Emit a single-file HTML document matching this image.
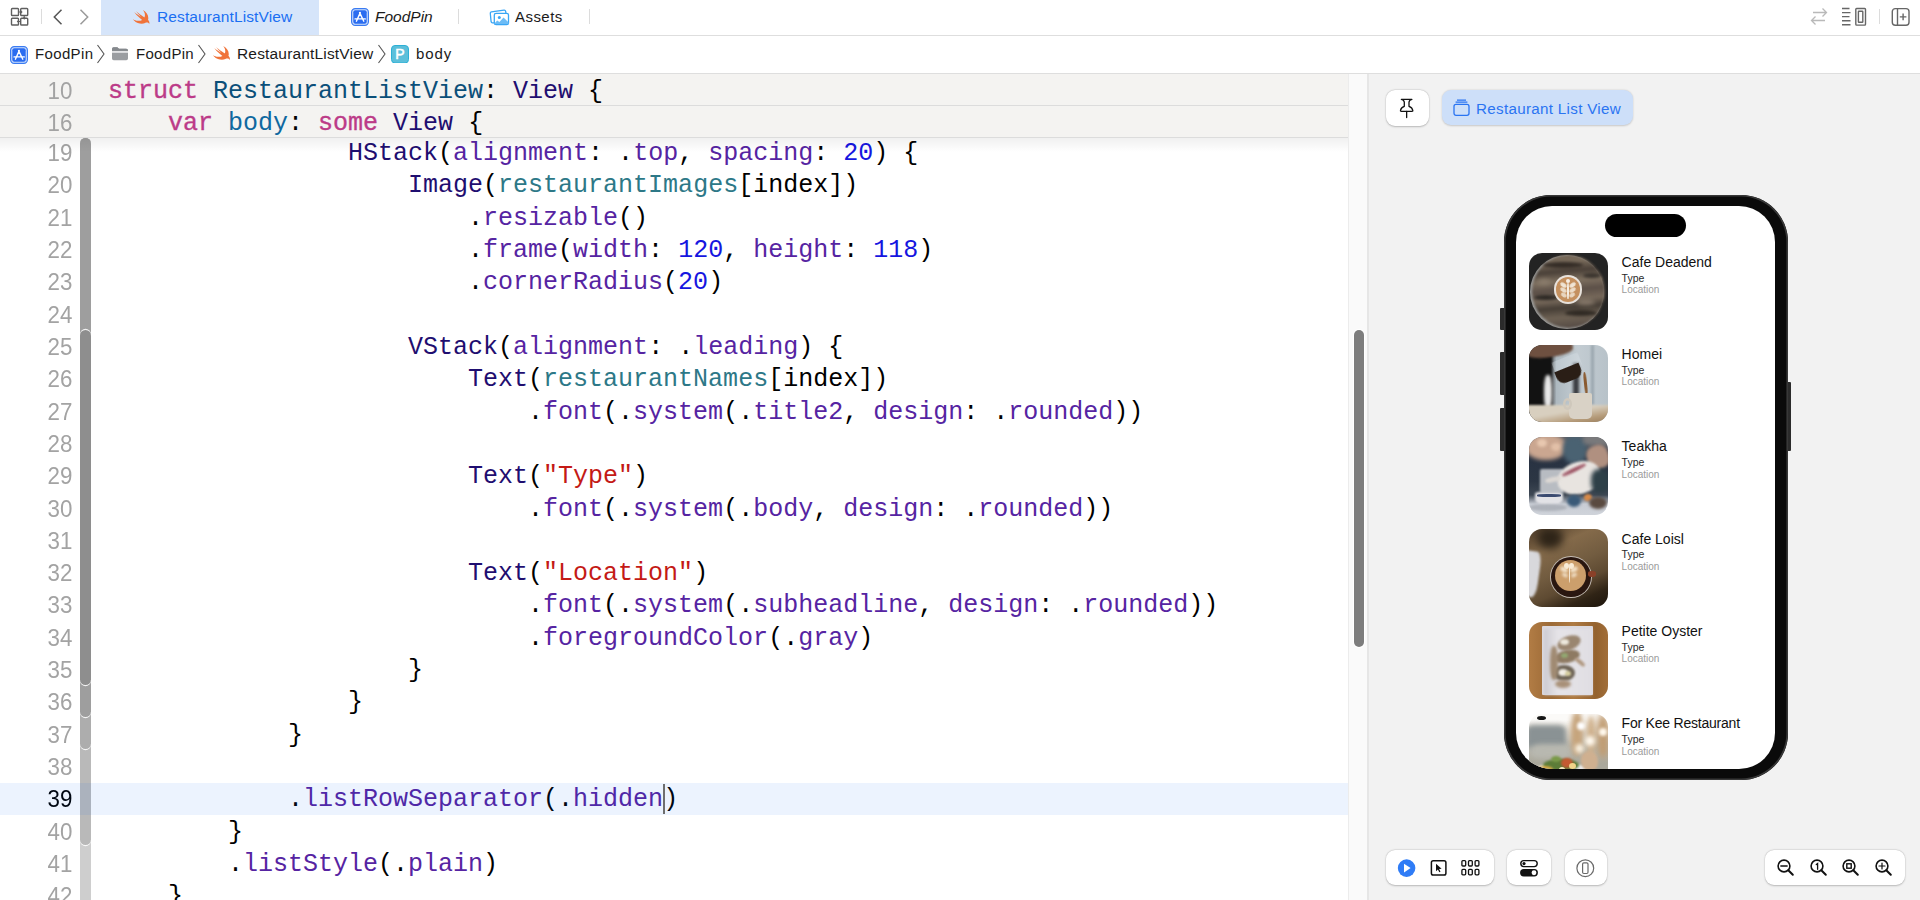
<!DOCTYPE html>
<html><head><meta charset="utf-8">
<style>
*{box-sizing:border-box;margin:0;padding:0}
html,body{width:1920px;height:900px;overflow:hidden;background:#fff;font-family:"Liberation Sans",sans-serif}
.abs{position:absolute}
/* tab bar */
#tabbar{position:absolute;left:0;top:0;width:1920px;height:36px;background:#fff;border-bottom:1px solid #dedede}
#crumb{position:absolute;left:0;top:36px;width:1920px;height:38px;background:#fff;border-bottom:1px solid #dedede}
.tabtxt{position:absolute;font-size:15.5px;line-height:18px;white-space:nowrap}
/* editor */
#editor{position:absolute;left:0;top:74px;width:1348px;height:826px;background:#fff;overflow:hidden}
.row{position:absolute;left:0;width:1348px;height:32.32px}
.ln{position:absolute;left:0;width:72.3px;transform:scaleX(0.95);transform-origin:72.3px 0;text-align:right;font-family:"Liberation Sans",sans-serif;font-size:23.5px;color:#a3a3a3;top:1px;line-height:32px;height:32px}
.ln.cur{color:#000}
.src{position:absolute;left:108px;top:2px;font-family:"Liberation Mono",monospace;font-size:25px;line-height:32px;white-space:pre;color:#000}
.k{color:#bc3b88;-webkit-text-stroke:0.35px #bc3b88}
.td{color:#0b4f79}
.t{color:#1f0e70}
.d{color:#0f68a0}
.f{color:#5624a2}
.p{color:#2d7887}
.n{color:#1616e0}
.s{color:#c41a16}
.hrow{position:absolute;left:0;width:1348px;height:32px;background:#f4f3f1;border-bottom:1px solid #dcdcdc}
.hrow .ln{top:1px}
#ribbon{position:absolute;left:80px;top:64px;width:11px;height:762px;border-radius:5.5px 5.5px 0 0;overflow:hidden}
.rb{box-shadow:0 1.2px 0 rgba(255,255,255,.85)}
#hdrshadow{position:absolute;left:0;top:64px;width:1348px;height:14px;background:linear-gradient(rgba(0,0,0,.06),rgba(0,0,0,0));z-index:5}
.hrow{z-index:6}
#scrolltrack{position:absolute;left:1348px;top:74px;width:21px;height:826px;background:#fafafa;border-left:1px solid #ececec;border-right:2px solid #e6e6e6}
#thumb{position:absolute;left:1353.5px;top:330px;width:10.5px;height:316.5px;border-radius:6px;background:#7d7d7d;box-shadow:0 0 0 1px #fff}
#canvas{position:absolute;left:1369px;top:74px;width:551px;height:826px;background:#f2f2f2}

.btn{position:absolute;background:#fff;border-radius:9px;box-shadow:0 0.5px 2px rgba(0,0,0,.22),0 0 0 0.5px rgba(0,0,0,.06)}
.rname{position:absolute;font-size:14px;line-height:16px;color:#111;white-space:nowrap}
.rtype{position:absolute;font-size:10.5px;line-height:12px;color:#2a2a2a;white-space:nowrap}
.rloc{position:absolute;font-size:10px;line-height:12px;color:#9b9b9b;white-space:nowrap}
.img{position:absolute;left:13.5px;width:78.5px;height:77.5px;border-radius:13px;overflow:hidden}

.img i{position:absolute;display:block}
</style></head><body>
<div id="tabbar">
<svg class="abs" style="left:10px;top:7px" width="20" height="20" viewBox="0 0 20 20" fill="none" stroke="#5f5f5f" stroke-width="1.4">
<rect x="1.5" y="1.5" width="7" height="7" rx="0.8"/><rect x="10.7" y="1.5" width="7" height="7" rx="0.8"/><rect x="1.5" y="11.2" width="7" height="6.8" rx="0.8"/><rect x="10.7" y="11.2" width="7" height="6.8" rx="0.8"/><path d="M8.5 5 H11.5 M10.6 4 L11.8 5 L10.6 6 M14.2 8.5 V11.6 M13.2 10.6 L14.2 11.8 L15.2 10.6 M10.7 14.5 H7.8 M8.8 13.5 L7.6 14.5 L8.8 15.5" stroke-width="1.1"/>
</svg>
<div class="abs" style="left:40.5px;top:9px;width:1.2px;height:15px;background:#dcdcdc"></div>
<svg class="abs" style="left:52px;top:8px" width="12" height="18" viewBox="0 0 12 18" fill="none" stroke="#555" stroke-width="1.5"><path d="M9.5 1.8 L2.3 9 L9.5 16.2"/></svg>
<svg class="abs" style="left:78px;top:8px" width="12" height="18" viewBox="0 0 12 18" fill="none" stroke="#9a9a9a" stroke-width="1.5"><path d="M2.5 1.8 L9.7 9 L2.5 16.2"/></svg>
<div class="abs" style="left:101px;top:0;width:218px;height:35px;background:#d6e5fa"></div>
<svg class="abs" style="left:133px;top:10px" width="16.5" height="14" viewBox="2.9 3.3 17.7 16.6" preserveAspectRatio="none"><path d="M13.543 3.41c4.114 2.47 6.545 7.162 5.549 11.131-.024.093-.05.181-.076.272l.002.001c2.062 2.538 1.5 5.258 1.236 4.745-1.072-2.086-3.066-1.568-4.088-1.043a6.803 6.803 0 0 1-.281.158l-.02.012-.002.002c-2.115 1.123-4.957 1.205-7.812-.022a12.568 12.568 0 0 1-5.64-4.838c.649.48 1.35.902 2.097 1.252 3.019 1.414 6.051 1.311 8.197-.002C9.651 12.73 7.101 9.67 5.146 7.191a10.628 10.628 0 0 1-1.005-1.384c2.34 2.142 6.038 4.83 7.365 5.576C8.69 8.408 6.208 4.743 6.324 4.86c4.436 4.47 8.528 6.996 8.528 6.996.154.085.27.154.36.213.085-.215.16-.437.224-.668.708-2.588-.09-5.548-1.893-7.992z" fill="#f0733a"/></svg>
<div class="tabtxt" style="left:157px;top:8.2px;color:#1a6ff2;letter-spacing:0.11px">RestaurantListView</div>
<svg class="abs" style="left:350.5px;top:8px" width="18" height="18" viewBox="0 0 18 18"><rect x="0.6" y="0.6" width="16.8" height="16.8" rx="3.6" fill="#d0e0fb" stroke="#3a7bf2" stroke-width="1.2"/><rect x="2.3" y="2.3" width="13.4" height="13.4" rx="2" fill="#2a6cf0"/><path d="M9.3 4.6 L5.4 13.2 M8.6 4.6 L12.8 13.2 M4 10.9 H14.3" stroke="#fff" stroke-width="1.4" stroke-linecap="round" fill="none"/></svg>
<div class="tabtxt" style="left:375px;top:7.9px;color:#1b1b1b;font-style:italic;font-size:15.5px">FoodPin</div>
<div class="abs" style="left:458px;top:9px;width:1.2px;height:15px;background:#dcdcdc"></div>
<svg class="abs" style="left:488px;top:7px" width="23" height="20" viewBox="0 0 23 20" fill="none" stroke="#3aa6f5" stroke-width="1.3" stroke-linejoin="round">
<path d="M6.2 15.8 L4.6 15.9 Q3.3 16 3.1 14.7 L2.3 6.5 Q2.1 5.2 3.4 4.9 L16 3.1 Q17.3 2.9 17.6 4.2 L17.9 6.2"/>
<rect x="6.3" y="6.3" width="14.2" height="11.4" rx="1.8" fill="#fff"/>
<circle cx="11.3" cy="10.4" r="1.5" fill="#3aa6f5" stroke="none"/>
<path d="M6.4 16.6 L9.2 13.4 L11.4 15 L15.5 10.4 L20.4 15.2 L20.4 17 L6.4 17Z" fill="#6cbcf6" stroke="none"/>
</svg>
<div class="tabtxt" style="left:515px;top:8.2px;color:#1b1b1b;font-size:15px;letter-spacing:0.45px">Assets</div>
<div class="abs" style="left:588.5px;top:9px;width:1.2px;height:15px;background:#dcdcdc"></div>
<svg class="abs" style="left:1809px;top:7px" width="20" height="20" viewBox="0 0 20 20" fill="none" stroke="#b9b9b9" stroke-width="1.3">
<path d="M4 5.5 L17.5 5.5 M13.5 1.5 L17.5 5.5 L13.5 9.5"/><path d="M16 13.5 L2.5 13.5 M6.5 9.5 L2.5 13.5 L6.5 17.5"/>
</svg>
<svg class="abs" style="left:1840px;top:7px" width="28" height="20" viewBox="0 0 28 20" fill="none" stroke="#666" stroke-width="1.4">
<path d="M2 1.5 H9.5 M2 5.6 H10.5 M2 9.6 H9.5 M2 13.7 H10.5 M2 17.7 H10.5"/>
<rect x="15.8" y="1.5" width="9.7" height="16.6" rx="0.8"/><rect x="18.4" y="4.2" width="4.4" height="11" rx="0.5"/>
</svg>
<div class="abs" style="left:1878.5px;top:9px;width:1.2px;height:15px;background:#dcdcdc"></div>
<svg class="abs" style="left:1890px;top:7px" width="21" height="20" viewBox="0 0 21 20" fill="none" stroke="#666" stroke-width="1.4">
<rect x="2.3" y="1.6" width="16.7" height="16.6" rx="3"/><path d="M7.5 1.6 V18.2"/><path d="M13.1 6.6 V13.2 M9.8 9.9 H16.4"/>
</svg>
</div>
<div id="crumb">
<svg class="abs" style="left:9.5px;top:9.8px" width="18" height="18" viewBox="0 0 18 18"><rect x="0.6" y="0.6" width="16.8" height="16.8" rx="3.6" fill="#d0e0fb" stroke="#3a7bf2" stroke-width="1.2"/><rect x="2.3" y="2.3" width="13.4" height="13.4" rx="2" fill="#2a6cf0"/><path d="M9.3 4.6 L5.4 13.2 M8.6 4.6 L12.8 13.2 M4 10.9 H14.3" stroke="#fff" stroke-width="1.4" stroke-linecap="round" fill="none"/></svg>
<div class="tabtxt" style="left:35px;top:9.2px;color:#1b1b1b;font-size:15px;letter-spacing:0.35px">FoodPin</div>
<svg class="abs" style="left:96px;top:8px" width="10" height="20" viewBox="0 0 10 20" fill="none" stroke="#555" stroke-width="1.1"><path d="M1.5 1 L8 10 L1.5 19"/></svg>
<svg class="abs" style="left:111px;top:10px" width="18" height="15" viewBox="0 0 18 15"><path d="M1 3 Q1 1.3 2.7 1.3 L6.3 1.3 L8 2.8 L15.3 2.8 Q17 2.8 17 4.5 L17 12.5 Q17 14.2 15.3 14.2 L2.7 14.2 Q1 14.2 1 12.5Z" fill="#9a9da1"/><path d="M1 3 Q1 1.3 2.7 1.3 L6.3 1.3 L8 2.8 L15.3 2.8 Q17 2.8 17 4.5 L17 5 L1 5Z" fill="#85898d"/><path d="M1 5.9 H17" stroke="#e2e3e5" stroke-width="1.9"/></svg>
<div class="tabtxt" style="left:136px;top:9.2px;color:#1b1b1b;font-size:15px;letter-spacing:0.3px">FoodPin</div>
<svg class="abs" style="left:197px;top:8px" width="10" height="20" viewBox="0 0 10 20" fill="none" stroke="#555" stroke-width="1.1"><path d="M1.5 1 L8 10 L1.5 19"/></svg>
<svg class="abs" style="left:212.5px;top:10px" width="17" height="14" viewBox="2.9 3.3 17.7 16.6" preserveAspectRatio="none"><path d="M13.543 3.41c4.114 2.47 6.545 7.162 5.549 11.131-.024.093-.05.181-.076.272l.002.001c2.062 2.538 1.5 5.258 1.236 4.745-1.072-2.086-3.066-1.568-4.088-1.043a6.803 6.803 0 0 1-.281.158l-.02.012-.002.002c-2.115 1.123-4.957 1.205-7.812-.022a12.568 12.568 0 0 1-5.64-4.838c.649.48 1.35.902 2.097 1.252 3.019 1.414 6.051 1.311 8.197-.002C9.651 12.73 7.101 9.67 5.146 7.191a10.628 10.628 0 0 1-1.005-1.384c2.34 2.142 6.038 4.83 7.365 5.576C8.69 8.408 6.208 4.743 6.324 4.86c4.436 4.47 8.528 6.996 8.528 6.996.154.085.27.154.36.213.085-.215.16-.437.224-.668.708-2.588-.09-5.548-1.893-7.992z" fill="#f0733a"/></svg>
<div class="tabtxt" style="left:237px;top:9.2px;color:#1b1b1b;font-size:15.5px;letter-spacing:0.17px">RestaurantListView</div>
<svg class="abs" style="left:376.5px;top:8px" width="10" height="20" viewBox="0 0 10 20" fill="none" stroke="#555" stroke-width="1.1"><path d="M1.5 1 L8 10 L1.5 19"/></svg>
<svg class="abs" style="left:391px;top:8.6px" width="18" height="18.5" viewBox="0 0 18 18.5"><rect x="0.5" y="0.5" width="17" height="17.5" rx="3.5" fill="#5cbfda" stroke="#2cb0d6" stroke-width="1"/><text x="9" y="14.1" text-anchor="middle" font-family="Liberation Sans" font-size="14" fill="#fff" stroke="#fff" stroke-width="0.5">P</text></svg>
<div class="tabtxt" style="left:416px;top:9.2px;color:#1b1b1b;font-size:15px;letter-spacing:0.9px">body</div>
</div>
<div id="editor">
<div class="row" style="top:62.00px"><div class="ln">19</div><div class="src">                <span class="t">HStack</span>(<span class="f">alignment</span>: .<span class="f">top</span>, <span class="f">spacing</span>: <span class="n">20</span>) {</div></div>
<div class="row" style="top:94.32px"><div class="ln">20</div><div class="src">                    <span class="t">Image</span>(<span class="p">restaurantImages</span>[index])</div></div>
<div class="row" style="top:126.64px"><div class="ln">21</div><div class="src">                        .<span class="f">resizable</span>()</div></div>
<div class="row" style="top:158.96px"><div class="ln">22</div><div class="src">                        .<span class="f">frame</span>(<span class="f">width</span>: <span class="n">120</span>, <span class="f">height</span>: <span class="n">118</span>)</div></div>
<div class="row" style="top:191.28px"><div class="ln">23</div><div class="src">                        .<span class="f">cornerRadius</span>(<span class="n">20</span>)</div></div>
<div class="row" style="top:223.60px"><div class="ln">24</div><div class="src"></div></div>
<div class="row" style="top:255.92px"><div class="ln">25</div><div class="src">                    <span class="t">VStack</span>(<span class="f">alignment</span>: .<span class="f">leading</span>) {</div></div>
<div class="row" style="top:288.24px"><div class="ln">26</div><div class="src">                        <span class="t">Text</span>(<span class="p">restaurantNames</span>[index])</div></div>
<div class="row" style="top:320.56px"><div class="ln">27</div><div class="src">                            .<span class="f">font</span>(.<span class="f">system</span>(.<span class="f">title2</span>, <span class="f">design</span>: .<span class="f">rounded</span>))</div></div>
<div class="row" style="top:352.88px"><div class="ln">28</div><div class="src"></div></div>
<div class="row" style="top:385.20px"><div class="ln">29</div><div class="src">                        <span class="t">Text</span>(<span class="s">&quot;Type&quot;</span>)</div></div>
<div class="row" style="top:417.52px"><div class="ln">30</div><div class="src">                            .<span class="f">font</span>(.<span class="f">system</span>(.<span class="f">body</span>, <span class="f">design</span>: .<span class="f">rounded</span>))</div></div>
<div class="row" style="top:449.84px"><div class="ln">31</div><div class="src"></div></div>
<div class="row" style="top:482.16px"><div class="ln">32</div><div class="src">                        <span class="t">Text</span>(<span class="s">&quot;Location&quot;</span>)</div></div>
<div class="row" style="top:514.48px"><div class="ln">33</div><div class="src">                            .<span class="f">font</span>(.<span class="f">system</span>(.<span class="f">subheadline</span>, <span class="f">design</span>: .<span class="f">rounded</span>))</div></div>
<div class="row" style="top:546.80px"><div class="ln">34</div><div class="src">                            .<span class="f">foregroundColor</span>(.<span class="f">gray</span>)</div></div>
<div class="row" style="top:579.12px"><div class="ln">35</div><div class="src">                    }</div></div>
<div class="row" style="top:611.44px"><div class="ln">36</div><div class="src">                }</div></div>
<div class="row" style="top:643.76px"><div class="ln">37</div><div class="src">            }</div></div>
<div class="row" style="top:676.08px"><div class="ln">38</div><div class="src"></div></div>
<div class="row" style="top:708.40px"><div class="ln cur">39</div><div class="src">            .<span class="f">listRowSeparator</span>(.<span class="f">hidden</span>)</div></div>
<div class="row" style="top:740.72px"><div class="ln">40</div><div class="src">        }</div></div>
<div class="row" style="top:773.04px"><div class="ln">41</div><div class="src">        .<span class="f">listStyle</span>(.<span class="f">plain</span>)</div></div>
<div class="row" style="top:805.36px"><div class="ln">42</div><div class="src">    }</div></div>
<div id="hl" class="abs" style="left:0;top:708.7px;width:1348px;height:32.1px;background:rgba(0,100,240,0.075);z-index:3"></div>
<div id="ribbon">
<div class="abs rb" style="left:0;top:-74px;width:11px;height:836px;background:#cecece"></div>
<div class="abs rb" style="left:0;top:-74px;width:11px;height:780.5px;background:#b9b9b9;border-radius:0 0 5.5px 5.5px"></div>
<div class="abs rb" style="left:0;top:-74px;width:11px;height:684.5px;background:#adadad;border-radius:0 0 5.5px 5.5px"></div>
<div class="abs rb" style="left:0;top:-74px;width:11px;height:652.5px;background:#9e9e9e;border-radius:0 0 5.5px 5.5px"></div>
<div class="abs rb" style="left:0;top:192px;width:11px;height:354.5px;background:#8e8e8e;border-radius:5.5px;box-shadow:0 1.2px 0 rgba(255,255,255,.85),0 -1.2px 0 rgba(255,255,255,.85)"></div>
</div>
<div class="abs" style="left:663.3px;top:710px;width:2px;height:29.6px;background:#6e6e6e;z-index:4"></div>
<div class="hrow" style="top:0px"><div class="ln">10</div><div class="src"><span class="k">struct</span> <span class="td">RestaurantListView</span>: <span class="t">View</span> {</div></div>
<div class="hrow" style="top:32px"><div class="ln">16</div><div class="src">    <span class="k">var</span> <span class="d">body</span>: <span class="k">some</span> <span class="t">View</span> {</div></div>
<div id="hdrshadow"></div>
</div>
<div id="scrolltrack"></div>
<div id="thumb"></div>
<div id="canvas"></div>
<div class="btn" style="left:1386px;top:90px;width:42.5px;height:35.5px;"></div>
<svg class="abs" style="left:1398px;top:97px" width="18" height="22" viewBox="0 0 18 22" fill="none" stroke="#111" stroke-width="1.3" stroke-linejoin="round" stroke-linecap="round">
<path d="M3.4 2.4 Q6.1 3 6.3 5.2 V9.3 Q2.9 10.4 2.5 13.5 Q2.4 14.4 3.3 14.4 H14 Q14.9 14.4 14.8 13.5 Q14.4 10.4 11 9.3 V5.2 Q11.2 3 13.9 2.4 Z"/><path d="M8.65 14.4 V20.6"/>
</svg>
<div class="abs" style="left:1442px;top:90px;width:190.5px;height:35px;border-radius:9px;background:#cddff9;box-shadow:0 0.5px 2px rgba(0,0,0,.18)"></div>
<svg class="abs" style="left:1452px;top:98px" width="19" height="19" viewBox="0 0 19 19" fill="none" stroke="#2a74f2" stroke-width="1.3">
<path d="M5 2.2 H14 M3.6 4.2 H15.4"/><rect x="2" y="6.4" width="15" height="10.9" rx="2"/>
</svg>
<div class="abs" style="left:1476px;top:99.8px;font-size:15.2px;line-height:18px;color:#2a74f2;white-space:nowrap;letter-spacing:0.3px">Restaurant List View</div>

<!-- phone -->
<div class="abs" style="left:1500px;top:308.4px;width:4.5px;height:21.5px;background:#2b2b2b;border-radius:1px"></div>
<div class="abs" style="left:1500px;top:352px;width:4.5px;height:42.5px;background:#2b2b2b;border-radius:1px"></div>
<div class="abs" style="left:1500px;top:408px;width:4.5px;height:42.5px;background:#2b2b2b;border-radius:1px"></div>
<div class="abs" style="left:1786px;top:381.7px;width:4.5px;height:69px;background:#2b2b2b;border-radius:1px"></div>
<div class="abs" style="left:1503.6px;top:194.7px;width:284px;height:585.5px;border-radius:47px;background:#0a0a0a;box-shadow:inset 0 0 0 1.6px #383838"></div>
<div id="screen" class="abs" style="left:1515.8px;top:205.8px;width:259.4px;height:563px;border-radius:36px;background:#fff;overflow:hidden">
<div class="img im1" style="top:46.80px"><i style="left:0.0px;top:0.0px;width:78.5px;height:77.5px;background:#232323;border-radius:0"></i><i style="left:0.8px;top:2.2px;width:74.0px;height:74.0px;background:#9a9a98;border-radius:50%;filter:blur(0.5px)"></i><i style="left:2.5px;top:2.5px;width:73.0px;height:73.0px;background:linear-gradient(175deg,#6e6050 0%,#7a6c5c 12%,#4a4038 24%,#7e7060 36%,#5c5048 48%,#76685a 60%,#463e36 70%,#6e6254 82%,#4e4440 100%);border-radius:50%;filter:blur(0.8px)"></i><i style="left:14.0px;top:9.0px;width:40.0px;height:6.0px;background:#342c26;border-radius:50%;filter:blur(1.5px)"></i><i style="left:5.0px;top:42.0px;width:24.0px;height:5.0px;background:#2c2824;border-radius:50%;filter:blur(1.5px)"></i><i style="left:36.0px;top:57.0px;width:32.0px;height:6.0px;background:#302a24;border-radius:50%;filter:blur(1.5px)"></i><i style="left:54.0px;top:20.0px;width:18.0px;height:5.0px;background:#3a342e;border-radius:50%;filter:blur(1.5px)"></i><i style="left:8.0px;top:26.0px;width:14.0px;height:6.0px;background:#8a7c6c;border-radius:50%;filter:blur(2.0px)"></i><i style="left:48.0px;top:46.0px;width:18.0px;height:6.0px;background:#86786a;border-radius:50%;filter:blur(2.0px)"></i><i style="left:24.3px;top:22.5px;width:28.8px;height:28.8px;background:#e8e2dc;border-radius:50%;filter:blur(0.4px)"></i><i style="left:26.5px;top:24.7px;width:24.4px;height:24.4px;background:#c4905f;border-radius:50%;filter:blur(0.4px)"></i><i style="left:36.8px;top:26.5px;width:4.0px;height:4.0px;background:#f6eee4;border-radius:50%;filter:blur(0.6px)"></i><i style="left:31.0px;top:30.0px;width:7.0px;height:4.0px;background:#f0e4d4;border-radius:50%;filter:blur(0.7px);transform:rotate(35deg)"></i><i style="left:39.5px;top:30.0px;width:7.0px;height:4.0px;background:#f0e4d4;border-radius:50%;filter:blur(0.7px);transform:rotate(-35deg)"></i><i style="left:30.5px;top:35.0px;width:7.0px;height:4.0px;background:#ecdcc8;border-radius:50%;filter:blur(0.7px);transform:rotate(35deg)"></i><i style="left:40.0px;top:35.0px;width:7.0px;height:4.0px;background:#ecdcc8;border-radius:50%;filter:blur(0.7px);transform:rotate(-35deg)"></i><i style="left:31.5px;top:40.0px;width:6.0px;height:3.5px;background:#e8d6c0;border-radius:50%;filter:blur(0.7px);transform:rotate(35deg)"></i><i style="left:39.5px;top:40.0px;width:6.0px;height:3.5px;background:#e8d6c0;border-radius:50%;filter:blur(0.7px);transform:rotate(-35deg)"></i><i style="left:38.0px;top:30.0px;width:1.5px;height:16.0px;background:#f4ece0;border-radius:40%;filter:blur(0.4px)"></i></div>
<div class="rname" style="left:105.8px;top:48.15px">Cafe Deadend</div>
<div class="rtype" style="left:105.8px;top:65.86px">Type</div>
<div class="rloc" style="left:105.8px;top:78.44px">Location</div>
<div class="img im2" style="top:139.06px"><i style="left:-5.0px;top:-5.0px;width:90.0px;height:90.0px;background:linear-gradient(90deg,#2a2a2a 0 28%,#aeb9c0 36%,#c3ccd2 60%,#b5c0c7 100%);border-radius:0"></i><i style="left:44.0px;top:18.0px;width:6.0px;height:42.0px;background:#3a3c40;border-radius:0;filter:blur(1.5px)"></i><i style="left:62.0px;top:0.0px;width:3.0px;height:60.0px;background:#9aa6ae;border-radius:0;filter:blur(1.0px)"></i><i style="left:-2.0px;top:10.0px;width:25.0px;height:60.0px;background:#121212;border-radius:0;filter:blur(0.8px)"></i><i style="left:15.0px;top:30.0px;width:8.0px;height:34.0px;background:#e8e8e8;border-radius:40%;filter:blur(1.8px)"></i><i style="left:-2.0px;top:-3.0px;width:46.0px;height:15.0px;background:#6e5040;border-radius:40%;filter:blur(1.2px);transform:rotate(-8deg)"></i><i style="left:24.0px;top:12.0px;width:28.0px;height:14.0px;background:rgba(220,228,235,.35);border-radius:10%;filter:blur(0.5px);transform:rotate(-22deg)"></i><i style="left:27.0px;top:22.0px;width:26.0px;height:14.0px;background:#2a1e16;border-radius:0 0 8px 8px;filter:blur(0.6px);transform:rotate(-22deg)"></i><i style="left:55.0px;top:27.0px;width:3.0px;height:23.0px;background:#8a5a30;border-radius:40%;filter:blur(0.6px);transform:rotate(-6deg)"></i><i style="left:-10.0px;top:60.0px;width:100.0px;height:25.0px;background:linear-gradient(170deg,#d8cfbf 0 35%,#b49a78 60%,#7a5c3c 100%);border-radius:0;filter:blur(1.0px)"></i><i style="left:40.0px;top:48.0px;width:23.0px;height:26.0px;background:#d9d2c6;border-radius:2px 2px 5px 5px;filter:blur(0.5px)"></i><i style="left:34.0px;top:53.0px;width:9.0px;height:12.0px;background:transparent;border-radius:50%;box-shadow:inset 0 0 0 2.5px #cfc8bc"></i></div>
<div class="rname" style="left:105.8px;top:140.41px">Homei</div>
<div class="rtype" style="left:105.8px;top:158.12px">Type</div>
<div class="rloc" style="left:105.8px;top:170.70px">Location</div>
<div class="img im3" style="top:231.32px"><i style="left:-5.0px;top:-5.0px;width:90.0px;height:90.0px;background:linear-gradient(180deg,#5a5e66 0 12%,#283242 28%,#2c3644 55%,#3e4854 70%,#c8ccd4 80%,#d4d8de 100%);border-radius:0"></i><i style="left:-3.0px;top:-3.0px;width:40.0px;height:26.0px;background:#caa690;border-radius:45%;filter:blur(2.0px)"></i><i style="left:8.0px;top:2.0px;width:10.0px;height:8.0px;background:#e8c8b0;border-radius:50%;filter:blur(1.5px)"></i><i style="left:22.0px;top:6.0px;width:10.0px;height:8.0px;background:#e2c0a8;border-radius:50%;filter:blur(1.5px)"></i><i style="left:34.0px;top:-1.0px;width:24.0px;height:28.0px;background:#4a6272;border-radius:45%;filter:blur(2.0px)"></i><i style="left:54.0px;top:-4.0px;width:30.0px;height:12.0px;background:#7a7a7c;border-radius:30%;filter:blur(2.0px)"></i><i style="left:58.0px;top:8.0px;width:22.0px;height:24.0px;background:#b09080;border-radius:40%;filter:blur(1.6px);transform:rotate(-20deg)"></i><i style="left:11.0px;top:32.0px;width:24.0px;height:24.0px;background:#b8bcc2;border-radius:8%;filter:blur(1.2px)"></i><i style="left:28.0px;top:25.0px;width:44.0px;height:32.0px;background:#e8e4e0;border-radius:55% 45% 50% 50%;filter:blur(0.8px);transform:rotate(-14deg)"></i><i style="left:16.0px;top:40.0px;width:16.0px;height:5.0px;background:#dcd8d4;border-radius:40%;filter:blur(0.8px);transform:rotate(-12deg)"></i><i style="left:32.0px;top:31.0px;width:26.0px;height:4.0px;background:#a05868;border-radius:40%;filter:blur(0.8px);transform:rotate(-26deg)"></i><i style="left:6.0px;top:55.0px;width:28.0px;height:14.0px;background:#e2e2e6;border-radius:15% 15% 50% 50%;filter:blur(0.8px)"></i><i style="left:8.0px;top:57.0px;width:24.0px;height:2.5px;background:#3a4a70;border-radius:40%;filter:blur(0.5px)"></i><i style="left:0.0px;top:67.0px;width:38.0px;height:7.0px;background:#aeb2ba;border-radius:50%;filter:blur(0.8px)"></i><i style="left:38.0px;top:58.0px;width:14.0px;height:12.0px;background:#3a5a78;border-radius:50%;filter:blur(1.5px)"></i><i style="left:55.0px;top:57.0px;width:8.0px;height:7.0px;background:#d88a48;border-radius:50%;filter:blur(0.8px)"></i><i style="left:60.0px;top:60.0px;width:18.0px;height:12.0px;background:#5a4a40;border-radius:50%;filter:blur(1.5px)"></i><i style="left:62.0px;top:32.0px;width:18.0px;height:24.0px;background:#2e4048;border-radius:40%;filter:blur(2.0px)"></i></div>
<div class="rname" style="left:105.8px;top:232.67px">Teakha</div>
<div class="rtype" style="left:105.8px;top:250.38px">Type</div>
<div class="rloc" style="left:105.8px;top:262.96px">Location</div>
<div class="img im4" style="top:323.58px"><i style="left:-5.0px;top:-5.0px;width:90.0px;height:90.0px;background:linear-gradient(155deg,#5a4630 0 10%,#846a4a 28%,#725c40 48%,#5e4a32 64%,#302416 78%,#120c06 100%);border-radius:0"></i><i style="left:-6.0px;top:22.0px;width:16.0px;height:46.0px;background:#d8d8dc;border-radius:0 30% 30% 0;filter:blur(0.8px);transform:rotate(8deg)"></i><i style="left:8.0px;top:-2.0px;width:26.0px;height:22.0px;background:#2e2418;border-radius:50%;filter:blur(4.0px)"></i><i style="left:20.5px;top:26.5px;width:42.0px;height:42.0px;background:#c4bcb4;border-radius:50%;filter:blur(0.5px)"></i><i style="left:21.7px;top:27.7px;width:39.6px;height:39.6px;background:#2a1710;border-radius:50%;filter:blur(0.5px)"></i><i style="left:59.0px;top:42.0px;width:8.0px;height:6.0px;background:#8a4028;border-radius:40%;filter:blur(0.5px)"></i><i style="left:25.5px;top:31.0px;width:31.0px;height:31.0px;background:#cc9f6c;border-radius:50%;filter:blur(0.6px)"></i><i style="left:34.5px;top:33.5px;width:5.0px;height:6.0px;background:#f8ecd8;border-radius:50%;filter:blur(0.6px)"></i><i style="left:40.0px;top:33.5px;width:5.0px;height:6.0px;background:#f8ecd8;border-radius:50%;filter:blur(0.6px)"></i><i style="left:31.0px;top:38.0px;width:8.0px;height:5.0px;background:#f2e0c6;border-radius:50%;filter:blur(0.8px);transform:rotate(30deg)"></i><i style="left:41.0px;top:38.0px;width:8.0px;height:5.0px;background:#f2e0c6;border-radius:50%;filter:blur(0.8px);transform:rotate(-30deg)"></i><i style="left:33.0px;top:44.0px;width:6.0px;height:4.0px;background:#ecd8bc;border-radius:50%;filter:blur(0.8px);transform:rotate(30deg)"></i><i style="left:41.5px;top:44.0px;width:6.0px;height:4.0px;background:#ecd8bc;border-radius:50%;filter:blur(0.8px);transform:rotate(-30deg)"></i><i style="left:39.5px;top:35.0px;width:1.6px;height:19.0px;background:#f4e8d6;border-radius:40%;filter:blur(0.5px)"></i></div>
<div class="rname" style="left:105.8px;top:324.93px">Cafe Loisl</div>
<div class="rtype" style="left:105.8px;top:342.64px">Type</div>
<div class="rloc" style="left:105.8px;top:355.22px">Location</div>
<div class="img im5" style="top:415.84px"><i style="left:-5.0px;top:-5.0px;width:90.0px;height:90.0px;background:linear-gradient(90deg,#b68048 0%,#9c6a36 30%,#ae7a42 55%,#94622e 80%,#a8743e 100%);border-radius:0"></i><i style="left:12.4px;top:4.5px;width:51.6px;height:69.3px;background:#dcd9de;border-radius:1px;filter:blur(0.5px)"></i><i style="left:15.0px;top:7.0px;width:48.0px;height:66.0px;background:linear-gradient(90deg,#cdcbd1,#e6e4e8 30%,#e0dee3);border-radius:1px;filter:blur(1.0px)"></i><i style="left:28.0px;top:14.0px;width:24.0px;height:14.0px;background:#9a8670;border-radius:50%;filter:blur(1.0px);transform:rotate(-20deg)"></i><i style="left:25.0px;top:28.0px;width:26.0px;height:13.0px;background:#8e7a62;border-radius:50%;filter:blur(1.0px);transform:rotate(-12deg)"></i><i style="left:24.0px;top:43.0px;width:22.0px;height:16.0px;background:#6e6456;border-radius:50%;filter:blur(1.0px)"></i><i style="left:31.0px;top:17.0px;width:9.0px;height:6.0px;background:#ece8dc;border-radius:50%;filter:blur(0.8px)"></i><i style="left:32.0px;top:31.0px;width:7.0px;height:5.0px;background:#92a872;border-radius:50%;filter:blur(0.8px)"></i><i style="left:29.0px;top:47.0px;width:10.0px;height:7.0px;background:#f2eee6;border-radius:50%;filter:blur(0.8px)"></i><i style="left:36.0px;top:49.0px;width:6.0px;height:5.0px;background:#d8d0a0;border-radius:50%;filter:blur(0.8px)"></i><i style="left:21.0px;top:24.0px;width:8.0px;height:34.0px;background:#a08a72;border-radius:40%;filter:blur(1.6px)"></i><i style="left:45.0px;top:38.0px;width:12.0px;height:4.0px;background:#b09880;border-radius:40%;filter:blur(1.0px);transform:rotate(40deg)"></i><i style="left:26.0px;top:58.0px;width:16.0px;height:8.0px;background:#a89078;border-radius:50%;filter:blur(1.5px)"></i></div>
<div class="rname" style="left:105.8px;top:417.19px">Petite Oyster</div>
<div class="rtype" style="left:105.8px;top:434.90px">Type</div>
<div class="rloc" style="left:105.8px;top:447.48px">Location</div>
<div class="img im6" style="top:508.10px"><i style="left:-5.0px;top:-5.0px;width:90.0px;height:90.0px;background:linear-gradient(180deg,#fbfaf8 0 12%,#e8e2d8 22%,#bcbab0 40%,#aaa89c 60%);border-radius:0"></i><i style="left:-3.0px;top:11.0px;width:40.0px;height:24.0px;background:#8a9294;border-radius:20%;filter:blur(2.5px)"></i><i style="left:2.0px;top:30.0px;width:40.0px;height:14.0px;background:#b8b8b0;border-radius:30%;filter:blur(2.5px)"></i><i style="left:42.0px;top:-2.0px;width:12.0px;height:44.0px;background:#c6a47c;border-radius:40%;filter:blur(2.5px)"></i><i style="left:58.0px;top:2.0px;width:8.0px;height:40.0px;background:#cfb08a;border-radius:40%;filter:blur(2.5px)"></i><i style="left:68.0px;top:0.0px;width:12.0px;height:44.0px;background:#c09c72;border-radius:40%;filter:blur(3.0px)"></i><i style="left:48.0px;top:8.0px;width:8.0px;height:8.0px;background:#fff;border-radius:50%;filter:blur(1.5px)"></i><i style="left:56.0px;top:22.0px;width:10.0px;height:10.0px;background:#fffaf0;border-radius:50%;filter:blur(2.0px)"></i><i style="left:70.0px;top:14.0px;width:8.0px;height:8.0px;background:#fff8ec;border-radius:50%;filter:blur(1.5px)"></i><i style="left:46.0px;top:30.0px;width:9.0px;height:9.0px;background:#f8f0e0;border-radius:50%;filter:blur(2.0px)"></i><i style="left:8.0px;top:2.0px;width:9.0px;height:4.0px;background:#151515;border-radius:50%;filter:blur(0.5px)"></i><i style="left:5.0px;top:49.0px;width:56.0px;height:16.0px;background:#ececec;border-radius:50%;filter:blur(0.8px)"></i><i style="left:14.0px;top:45.0px;width:36.0px;height:12.0px;background:#5c7c38;border-radius:50%;filter:blur(1.2px)"></i><i style="left:22.0px;top:42.0px;width:10.0px;height:6.0px;background:#7a9a48;border-radius:50%;filter:blur(1.0px)"></i><i style="left:32.0px;top:44.0px;width:12.0px;height:10.0px;background:#c45a32;border-radius:50%;filter:blur(0.8px)"></i><i style="left:40.0px;top:49.0px;width:7.0px;height:6.0px;background:#f2d48a;border-radius:50%;filter:blur(0.6px)"></i><i style="left:30.0px;top:53.0px;width:6.0px;height:5.0px;background:#f6e8c0;border-radius:50%;filter:blur(0.6px)"></i><i style="left:52.0px;top:37.0px;width:17.0px;height:20.0px;background:#cfb090;border-radius:45%;filter:blur(0.8px);transform:rotate(-10deg)"></i><i style="left:8.0px;top:52.0px;width:16.0px;height:6.0px;background:#d8a840;border-radius:50%;filter:blur(1.0px)"></i></div>
<div class="rname" style="left:105.8px;top:509.45px;letter-spacing:-0.22px">For Kee Restaurant</div>
<div class="rtype" style="left:105.8px;top:527.16px">Type</div>
<div class="rloc" style="left:105.8px;top:539.74px">Location</div>
</div>
<div class="abs" style="left:1605px;top:213.9px;width:81px;height:23px;border-radius:11.5px;background:#000"></div>

<!-- bottom toolbar -->
<div class="btn" style="left:1385.6px;top:850px;width:108px;height:35px"></div>
<svg class="abs" style="left:1396px;top:857px" width="22" height="22" viewBox="0 0 22 22"><circle cx="10.6" cy="11.1" r="8.8" fill="#2f7cf6"/><path d="M8 6.8 L14.6 11.1 L8 15.4Z" fill="#fff"/></svg>
<svg class="abs" style="left:1429px;top:858px" width="19" height="19" viewBox="0 0 19 19"><rect x="2.4" y="2.7" width="14.5" height="14.3" rx="1.8" fill="none" stroke="#111" stroke-width="1.5"/><path d="M7 5.8 L7 13.2 L8.9 11.4 L10.3 14.3 L11.5 13.7 L10.1 10.9 L12.6 10.7Z" fill="#111"/></svg>
<svg class="abs" style="left:1460px;top:858px" width="22" height="20" viewBox="0 0 22 20" fill="none" stroke="#111" stroke-width="1.3">
<rect x="1.9" y="2.6" width="3.8" height="5.4" rx="1"/><rect x="8.5" y="2.6" width="3.8" height="5.4" rx="1"/><rect x="15.1" y="2.6" width="3.8" height="5.4" rx="1"/>
<rect x="1.9" y="11.4" width="3.8" height="5.4" rx="1"/><rect x="8.5" y="11.4" width="3.8" height="5.4" rx="1"/><rect x="15.1" y="11.4" width="3.8" height="5.4" rx="1"/>
</svg>
<div class="btn" style="left:1507px;top:850px;width:43.6px;height:35px"></div>
<svg class="abs" style="left:1518px;top:858px" width="22" height="20" viewBox="0 0 22 20">
<rect x="2.8" y="2.6" width="16.4" height="6" rx="3" fill="none" stroke="#111" stroke-width="1.4"/><circle cx="6" cy="5.6" r="1.6" fill="#111"/>
<rect x="2.1" y="11.1" width="17.8" height="7.3" rx="3.65" fill="#111"/><circle cx="16" cy="14.75" r="2.4" fill="#fff"/>
</svg>
<div class="btn" style="left:1564.5px;top:850px;width:42.5px;height:35px"></div>
<svg class="abs" style="left:1575px;top:858px" width="21" height="21" viewBox="0 0 21 21" fill="none" stroke="#6a6a6a" stroke-width="1.2">
<circle cx="10.3" cy="10.2" r="8.4"/><rect x="7.6" y="4.9" width="5.4" height="10.6" rx="1.2"/>
</svg>
<div class="btn" style="left:1765px;top:849.7px;width:140px;height:35.5px"></div>
<svg class="abs" style="left:1777.1px;top:859.0px" width="20" height="20" viewBox="0 0 20 20" fill="none" stroke="#111" stroke-width="1.6" stroke-linecap="round"><circle cx="7" cy="7" r="5.9"/><path d="M11.3 11.3 L15.8 15.8" stroke-width="2"/><path d="M3.8 7 H10.2" stroke-width="1.3"/></svg>
<svg class="abs" style="left:1809.6px;top:859.0px" width="20" height="20" viewBox="0 0 20 20" fill="none" stroke="#111" stroke-width="1.6" stroke-linecap="round"><circle cx="7" cy="7" r="5.9"/><path d="M11.3 11.3 L15.8 15.8" stroke-width="2"/><path d="M6.3 5.6 L7.6 4.6 V10.3" stroke-width="1.3"/></svg>
<svg class="abs" style="left:1842.1px;top:859.0px" width="20" height="20" viewBox="0 0 20 20" fill="none" stroke="#111" stroke-width="1.6" stroke-linecap="round"><circle cx="7" cy="7" r="5.9"/><path d="M11.3 11.3 L15.8 15.8" stroke-width="2"/><rect x="4.8" y="4.8" width="4.4" height="4.4" stroke-width="1.4"/></svg>
<svg class="abs" style="left:1874.5px;top:859.0px" width="20" height="20" viewBox="0 0 20 20" fill="none" stroke="#111" stroke-width="1.6" stroke-linecap="round"><circle cx="7" cy="7" r="5.9"/><path d="M11.3 11.3 L15.8 15.8" stroke-width="2"/><path d="M4 7 H10 M7 4 V10" stroke-width="1.2"/></svg>

</body></html>
